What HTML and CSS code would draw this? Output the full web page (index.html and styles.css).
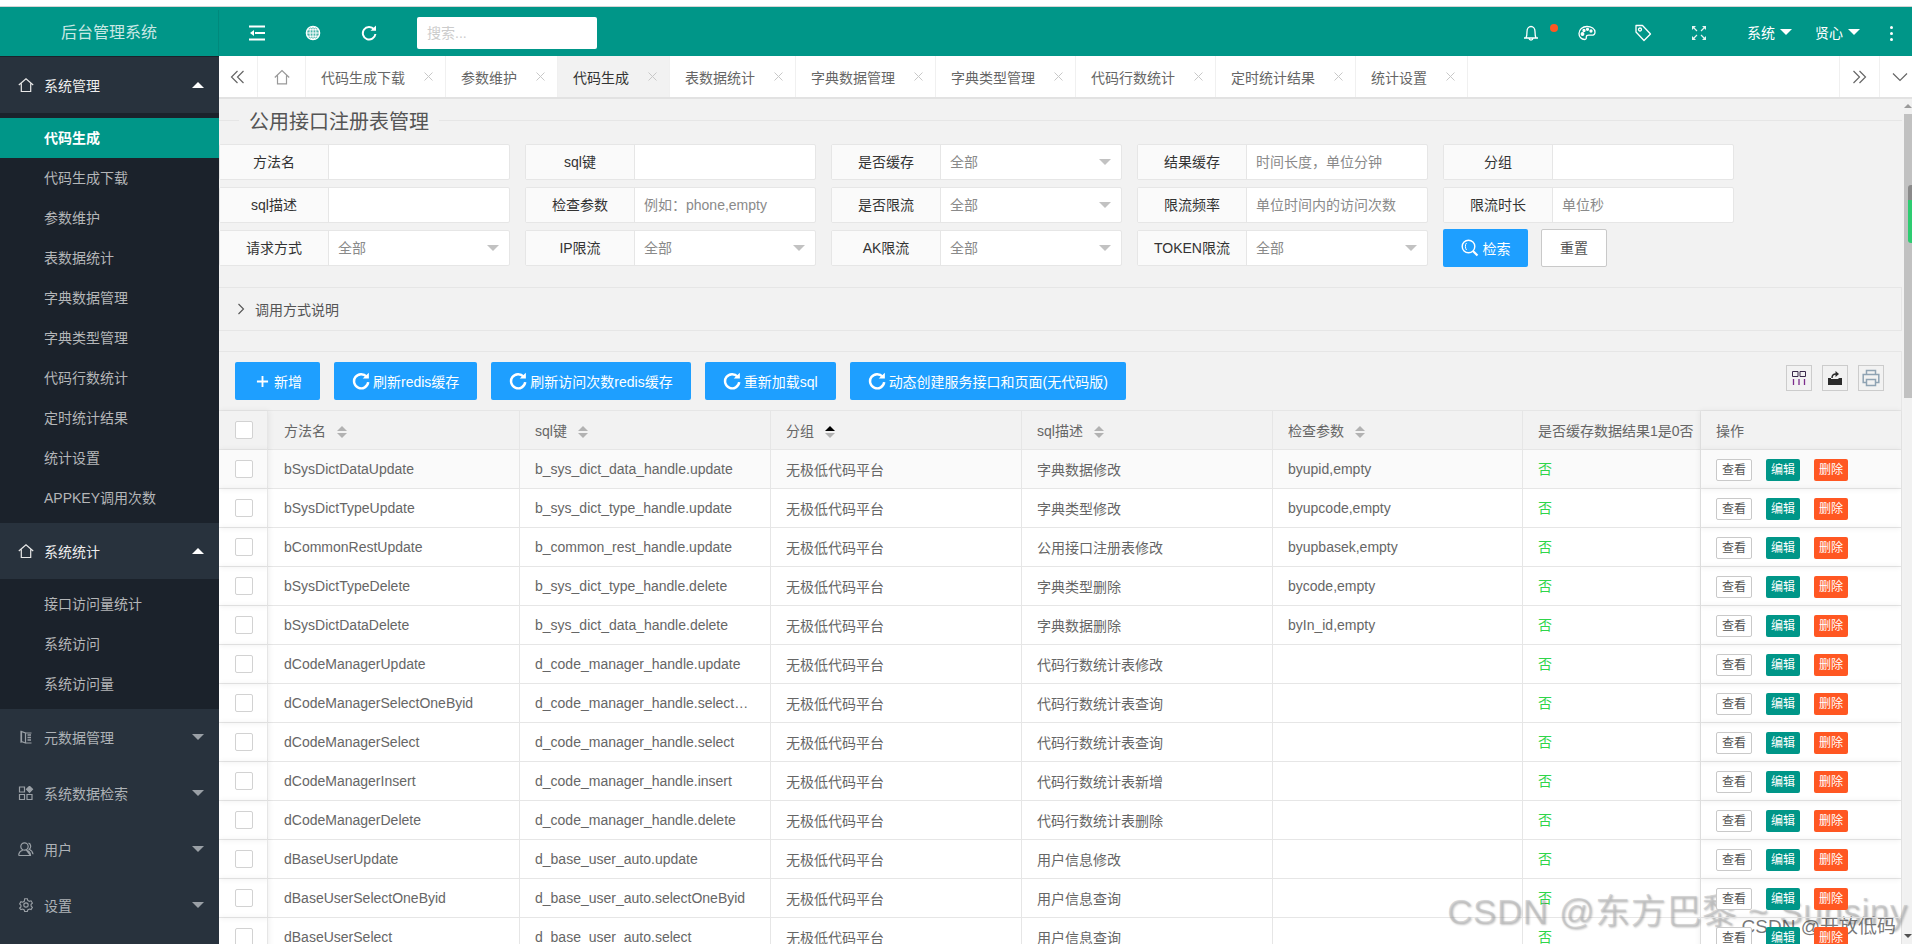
FILE: index.html
```html
<!DOCTYPE html>
<html lang="zh-CN">
<head>
<meta charset="utf-8">
<title>后台管理系统</title>
<link rel="stylesheet" href="styles.css">
</head>
<body>
<div class="app">
  <div class="topstrip"></div>
  <header class="header">
    <div class="logo">后台管理系统</div>
    <div class="hd-icon"><svg class="ic16" viewBox="0 0 16 16"><path d="M0 1.500h16M6 8h10M0 14.500h16" stroke="#fff" stroke-width="2" fill="none"/><path d="M1 8l4-3v6z" fill="#fff"/></svg></div>
    <div class="hd-icon"><svg class="ic16" viewBox="0 0 16 16" fill="none" stroke="#fff"><circle cx="8" cy="8" r="6.600" fill="#cfeee9" fill-opacity=".35" stroke-width="1.400"/><ellipse cx="8" cy="8" rx="3" ry="6.600"/><path d="M8 1.400v13.200M1.400 8h13.200M2.400 4.800h11.200M2.400 11.200h11.200"/></svg></div>
    <div class="hd-icon"><svg class="ic16" viewBox="0 0 16 16" fill="none"><path d="M13 4.200A6.300 6.300 0 1 0 14.400 9" stroke="#fff" stroke-width="2"/><path d="M9.500 5.800H15V.6z" fill="#fff"/></svg></div>
    <div class="hd-search">搜索...</div>
    <div class="hd-right">
      <div class="hd-icon"><svg class="ic18" viewBox="0 0 18 18" fill="none" stroke="#fff" stroke-width="1.300"><path d="M2 14h14M4 14c1-2 1-4 1-6.500C5 4.500 6.800 2.500 9 2.500s4 2 4 5c0 2.500 0 4.500 1 6.500M7 14.500c.3 2 3.700 2 4 0"/></svg><i class="dot"></i></div>
      <div class="hd-icon"><svg class="ic18" viewBox="0 0 18 18" fill="none" stroke="#fff" stroke-width="1.300"><path d="M9 2.500C4.500 2.500 1 5.500 1 9.500c0 3.500 2.500 6 5.500 6 2 0 1.800-1.500 1.800-2.500 0-1.300 1-1.800 2.500-1.800h2.700c2 0 3.500-1 3.500-3 0-3.500-3.500-5.700-8-5.700z"/><circle cx="4.500" cy="10" r="1.300" fill="#fff"/><circle cx="6" cy="6.500" r="1" fill="#fff"/><circle cx="9.500" cy="5.300" r="1" fill="#fff"/><circle cx="13" cy="7" r="1" fill="#fff"/></svg></div>
      <div class="hd-icon"><svg class="ic18" viewBox="0 0 18 18" fill="none" stroke="#fff" stroke-width="1.300"><path d="M2 1.500h6.500l8 8.500-6.500 6.500-8-8.500z" stroke-linejoin="round"/><circle cx="6" cy="5.500" r="1.500"/></svg></div>
      <div class="hd-icon"><svg class="ic14" viewBox="0 0 14 14" fill="none" stroke="#e6f4f2" stroke-width="1.200"><path d="M1.500 1.500L5 5M12.500 1.500L9 5M1.500 12.500L5 9M12.500 12.500L9 9"/><path d="M0 0h4L0 4zM14 0v4l-4-4zM0 14v-4l4 4zM14 14h-4l4-4z" fill="#e6f4f2" stroke="none"/></svg></div>
      <div class="hd-menu">系统<i class="tri-down white"></i></div>
      <div class="hd-menu next">贤心<i class="tri-down white"></i></div>
      <div class="hd-more"><i></i><i></i><i></i></div>
    </div>
  </header>
  <div class="body">
    <aside class="aside">
      <div class="side-head open first"><svg class="side-ic" viewBox="0 0 16 14" fill="none" stroke="#e8e8e8" stroke-width="1.200"><path d="M.8 7L8 .8 15.200 7M3.300 5.500v8h9.400v-8"/></svg><span class="side-label">系统管理</span><i class="tri-up"></i></div>
      <div class="side-sub">
        <div class="side-item active">代码生成</div>
        <div class="side-item">代码生成下载</div>
        <div class="side-item">参数维护</div>
        <div class="side-item">表数据统计</div>
        <div class="side-item">字典数据管理</div>
        <div class="side-item">字典类型管理</div>
        <div class="side-item">代码行数统计</div>
        <div class="side-item">定时统计结果</div>
        <div class="side-item">统计设置</div>
        <div class="side-item">APPKEY调用次数</div>
      </div>
      <div class="side-head open"><svg class="side-ic" viewBox="0 0 16 14" fill="none" stroke="#e8e8e8" stroke-width="1.200"><path d="M.8 7L8 .8 15.200 7M3.300 5.500v8h9.400v-8"/></svg><span class="side-label">系统统计</span><i class="tri-up"></i></div>
      <div class="side-sub">
        <div class="side-item">接口访问量统计</div>
        <div class="side-item">系统访问</div>
        <div class="side-item">系统访问量</div>
      </div>
      <div class="side-head"><svg class="side-ic" viewBox="0 0 16 14" fill="none" stroke="#9aa0a6" stroke-width="1.200"><path d="M3.500 1.500l4 1.500v10l-4-1.500zM7.500 3h6M7.500 13h6M3 .8v12"/><path d="M9.500 5h3.500M9.500 7.500h3.500M9.500 10h3.500" stroke-width="1.500"/></svg><span class="side-label">元数据管理</span><i class="tri-down"></i></div>
      <div class="side-head"><svg class="side-ic" viewBox="0 0 16 14" fill="none" stroke="#9aa0a6" stroke-width="1.200"><path d="M1.500 1h5v5h-5zM1.500 8.500h5v5h-5zM9 8.500h5v5H9z"/><path d="M11.500.3l3 3-3 3-3-3z" fill="#9aa0a6"/></svg><span class="side-label">系统数据检索</span><i class="tri-down"></i></div>
      <div class="side-head"><svg class="side-ic" viewBox="0 0 16 14" fill="none" stroke="#9aa0a6" stroke-width="1.200"><circle cx="6.500" cy="4.500" r="3.700"/><path d="M.7 13.500c0-3 2.300-4.800 4-5.200M8.500 8.300c1.700.4 4 2.200 4 5.200zM.7 13.500h12M10.500 1.200c2.500.7 3 4.500.7 6 1.800.8 3.500 2.500 3.800 5"/></svg><span class="side-label">用户</span><i class="tri-down"></i></div>
      <div class="side-head"><svg class="side-ic" viewBox="0 0 16 16" fill="none" stroke="#9aa0a6" stroke-width="1.300"><path d="M6.500.8h3l.5 2 1.800 1 2-.6 1.500 2.600-1.500 1.400v2l1.500 1.400-1.500 2.600-2-.6-1.800 1-.5 2h-3l-.5-2-1.800-1-2 .6L.7 11.600 2.200 10.200v-2L.7 6.800l1.500-2.600 2 .6 1.800-1z"/><circle cx="8" cy="8" r="2.500"/></svg><span class="side-label">设置</span><i class="tri-down"></i></div>
    </aside>
    <main class="main">
      <nav class="tabs">
        <div class="tab-tool tool-left"><svg class="ic16" viewBox="0 0 16 16" fill="none" stroke="#666" stroke-width="1.200"><path d="M7.500 2L1.500 8l6 6M13.500 2l-6 6 6 6"/></svg></div>
        <div class="tab-home"><svg class="ic16" viewBox="0 0 16 16" fill="none" stroke="#999" stroke-width="1.200"><path d="M.8 8.500L8 1.500l7.200 7M3.500 6.500v8.300h9V6.500"/></svg></div>
        <div class="tab">代码生成下载<svg class="x" viewBox="0 0 9 9"><path d="M.5.500l8 8M8.500.500l-8 8"/></svg></div>
        <div class="tab">参数维护<svg class="x" viewBox="0 0 9 9"><path d="M.5.500l8 8M8.500.500l-8 8"/></svg></div>
        <div class="tab active">代码生成<svg class="x" viewBox="0 0 9 9"><path d="M.5.500l8 8M8.500.500l-8 8"/></svg></div>
        <div class="tab">表数据统计<svg class="x" viewBox="0 0 9 9"><path d="M.5.500l8 8M8.500.500l-8 8"/></svg></div>
        <div class="tab">字典数据管理<svg class="x" viewBox="0 0 9 9"><path d="M.5.500l8 8M8.500.500l-8 8"/></svg></div>
        <div class="tab">字典类型管理<svg class="x" viewBox="0 0 9 9"><path d="M.5.500l8 8M8.500.500l-8 8"/></svg></div>
        <div class="tab">代码行数统计<svg class="x" viewBox="0 0 9 9"><path d="M.5.500l8 8M8.500.500l-8 8"/></svg></div>
        <div class="tab">定时统计结果<svg class="x" viewBox="0 0 9 9"><path d="M.5.500l8 8M8.500.500l-8 8"/></svg></div>
        <div class="tab">统计设置<svg class="x" viewBox="0 0 9 9"><path d="M.5.500l8 8M8.500.500l-8 8"/></svg></div>
        <div class="tab-tool tool-next"><svg class="ic16" viewBox="0 0 16 16" fill="none" stroke="#666" stroke-width="1.200"><path d="M1.500 2l6 6-6 6M7.500 2l6 6-6 6"/></svg></div>
        <div class="tab-tool tool-down"><svg class="ic16" viewBox="0 0 16 16" fill="none" stroke="#666" stroke-width="1.200"><path d="M1 4.500l7 7 7-7"/></svg></div>
      </nav>
      <div class="page">
        <div class="content">
          <div class="legend"><span class="legend-line short"></span><span class="legend-text">公用接口注册表管理</span><span class="legend-line"></span></div>
          <div class="form">
            <div class="field"><label class="f-label">方法名</label><div class="f-input"></div></div>
            <div class="field"><label class="f-label">sql键</label><div class="f-input"></div></div>
            <div class="field"><label class="f-label">是否缓存</label><div class="f-input sel">全部<i class="tri-sel"></i></div></div>
            <div class="field"><label class="f-label">结果缓存</label><div class="f-input">时间长度，单位分钟</div></div>
            <div class="field"><label class="f-label">分组</label><div class="f-input"></div></div>
            <div class="field"><label class="f-label">sql描述</label><div class="f-input"></div></div>
            <div class="field"><label class="f-label">检查参数</label><div class="f-input">例如：phone,empty</div></div>
            <div class="field"><label class="f-label">是否限流</label><div class="f-input sel">全部<i class="tri-sel"></i></div></div>
            <div class="field"><label class="f-label">限流频率</label><div class="f-input">单位时间内的访问次数</div></div>
            <div class="field"><label class="f-label">限流时长</label><div class="f-input">单位秒</div></div>
            <div class="field"><label class="f-label">请求方式</label><div class="f-input sel">全部<i class="tri-sel"></i></div></div>
            <div class="field"><label class="f-label">IP限流</label><div class="f-input sel">全部<i class="tri-sel"></i></div></div>
            <div class="field"><label class="f-label">AK限流</label><div class="f-input sel">全部<i class="tri-sel"></i></div></div>
            <div class="field"><label class="f-label">TOKEN限流</label><div class="f-input sel">全部<i class="tri-sel"></i></div></div>
            <div class="form-btns">
              <div class="btn-search"><svg class="ic18" viewBox="0 0 18 18" fill="none" stroke="#fff" stroke-width="1.400"><circle cx="7.500" cy="7.500" r="6.300"/><path d="M12 12l4.500 4.500" stroke-width="2.200"/><path d="M5.500 4c-1.500 1.500-1.500 5 0 7" stroke-width="1"/></svg>检索</div>
              <div class="btn-reset">重置</div>
            </div>
          </div>
          <div class="collapse"><svg class="chev" viewBox="0 0 8 12" fill="none" stroke="#555" stroke-width="1.100"><path d="M1.500 1l5 5-5 5"/></svg>调用方式说明</div>
          <section class="table-box">
            <div class="toolbar">
              <div class="btn"><svg class="ic-plus" viewBox="0 0 14 14" fill="none" stroke="#fff" stroke-width="2"><path d="M7 1v12M1 7h12"/></svg>新增</div>
              <div class="btn"><svg class="ic-ref" viewBox="0 0 16 16" fill="none"><path d="M13 4.200A6.300 6.300 0 1 0 14.400 9" stroke="#fff" stroke-width="2.200"/><path d="M9.500 5.800H15V.6z" fill="#fff"/></svg>刷新redis缓存</div>
              <div class="btn"><svg class="ic-ref" viewBox="0 0 16 16" fill="none"><path d="M13 4.200A6.300 6.300 0 1 0 14.400 9" stroke="#fff" stroke-width="2.200"/><path d="M9.500 5.800H15V.6z" fill="#fff"/></svg>刷新访问次数redis缓存</div>
              <div class="btn"><svg class="ic-ref" viewBox="0 0 16 16" fill="none"><path d="M13 4.200A6.300 6.300 0 1 0 14.400 9" stroke="#fff" stroke-width="2.200"/><path d="M9.500 5.800H15V.6z" fill="#fff"/></svg>重新加载sql</div>
              <div class="btn"><svg class="ic-ref" viewBox="0 0 16 16" fill="none"><path d="M13 4.200A6.300 6.300 0 1 0 14.400 9" stroke="#fff" stroke-width="2.200"/><path d="M9.500 5.800H15V.6z" fill="#fff"/></svg>动态创建服务接口和页面(无代码版)</div>
              <div class="tools">
                <div class="tool"><svg class="ic14" viewBox="0 0 14 14" fill="none" stroke="#3a2a4a" stroke-width="1"><path d="M.5.500h5.500v5H.5zM8 .5h5.500v5H8z"/><path d="M1.500 8v6M7 8v6M12.500 8v6" stroke="#7c2c8c" stroke-width="1.300"/></svg></div>
                <div class="tool"><svg class="ic14" viewBox="0 0 14 14"><path d="M0 7h3v1h7.500V7H14v7H0z" fill="#2b2b2b"/><path d="M4 7c0-3 2-4 4-4" fill="none" stroke="#2b2b2b" stroke-width="1.500"/><path d="M7.500 0l3.500 3-3.500 3z" fill="#2b2b2b"/></svg></div>
                <div class="tool"><svg class="ic18" viewBox="0 0 18 18" fill="none" stroke="#8fa3b3" stroke-width="1.500"><path d="M4.500 5.500V1.500h9v4M4.500 13.500H1.200V5.500h15.600v8h-3.300"/><path d="M4.500 10.500h9v6h-9z"/></svg></div>
              </div>
            </div>
            <table class="grid">
              <colgroup><col class="c-check"><col class="c-wide"><col class="c-std"><col class="c-std"><col class="c-std"><col class="c-param"><col class="c-cache"><col class="c-op"></colgroup>
              <thead>
                <tr>
                  <th class="fix-l"><i class="cb"></i></th>
                  <th>方法名<span class="sort"><i class="s-up"></i><i class="s-dn"></i></span></th>
                  <th>sql键<span class="sort"><i class="s-up"></i><i class="s-dn"></i></span></th>
                  <th>分组<span class="sort"><i class="s-up on"></i><i class="s-dn"></i></span></th>
                  <th>sql描述<span class="sort"><i class="s-up"></i><i class="s-dn"></i></span></th>
                  <th>检查参数<span class="sort"><i class="s-up"></i><i class="s-dn"></i></span></th>
                  <th class="th-long">是否缓存数据结果1是0否</th>
                  <th class="fix-r">操作</th>
                </tr>
              </thead>
              <tbody>
                <tr class="hover"><td class="fix-l"><i class="cb"></i></td><td>bSysDictDataUpdate</td><td>b_sys_dict_data_handle.update</td><td>无极低代码平台</td><td>字典数据修改</td><td>byupid,empty</td><td class="no">否</td><td class="fix-r"><span class="x-btn view">查看</span><span class="x-btn edit">编辑</span><span class="x-btn del">删除</span></td></tr>
                <tr><td class="fix-l"><i class="cb"></i></td><td>bSysDictTypeUpdate</td><td>b_sys_dict_type_handle.update</td><td>无极低代码平台</td><td>字典类型修改</td><td>byupcode,empty</td><td class="no">否</td><td class="fix-r"><span class="x-btn view">查看</span><span class="x-btn edit">编辑</span><span class="x-btn del">删除</span></td></tr>
                <tr><td class="fix-l"><i class="cb"></i></td><td>bCommonRestUpdate</td><td>b_common_rest_handle.update</td><td>无极低代码平台</td><td>公用接口注册表修改</td><td>byupbasek,empty</td><td class="no">否</td><td class="fix-r"><span class="x-btn view">查看</span><span class="x-btn edit">编辑</span><span class="x-btn del">删除</span></td></tr>
                <tr><td class="fix-l"><i class="cb"></i></td><td>bSysDictTypeDelete</td><td>b_sys_dict_type_handle.delete</td><td>无极低代码平台</td><td>字典类型删除</td><td>bycode,empty</td><td class="no">否</td><td class="fix-r"><span class="x-btn view">查看</span><span class="x-btn edit">编辑</span><span class="x-btn del">删除</span></td></tr>
                <tr><td class="fix-l"><i class="cb"></i></td><td>bSysDictDataDelete</td><td>b_sys_dict_data_handle.delete</td><td>无极低代码平台</td><td>字典数据删除</td><td>byIn_id,empty</td><td class="no">否</td><td class="fix-r"><span class="x-btn view">查看</span><span class="x-btn edit">编辑</span><span class="x-btn del">删除</span></td></tr>
                <tr><td class="fix-l"><i class="cb"></i></td><td>dCodeManagerUpdate</td><td>d_code_manager_handle.update</td><td>无极低代码平台</td><td>代码行数统计表修改</td><td></td><td class="no">否</td><td class="fix-r"><span class="x-btn view">查看</span><span class="x-btn edit">编辑</span><span class="x-btn del">删除</span></td></tr>
                <tr><td class="fix-l"><i class="cb"></i></td><td>dCodeManagerSelectOneByid</td><td>d_code_manager_handle.selectOneByid</td><td>无极低代码平台</td><td>代码行数统计表查询</td><td></td><td class="no">否</td><td class="fix-r"><span class="x-btn view">查看</span><span class="x-btn edit">编辑</span><span class="x-btn del">删除</span></td></tr>
                <tr><td class="fix-l"><i class="cb"></i></td><td>dCodeManagerSelect</td><td>d_code_manager_handle.select</td><td>无极低代码平台</td><td>代码行数统计表查询</td><td></td><td class="no">否</td><td class="fix-r"><span class="x-btn view">查看</span><span class="x-btn edit">编辑</span><span class="x-btn del">删除</span></td></tr>
                <tr><td class="fix-l"><i class="cb"></i></td><td>dCodeManagerInsert</td><td>d_code_manager_handle.insert</td><td>无极低代码平台</td><td>代码行数统计表新增</td><td></td><td class="no">否</td><td class="fix-r"><span class="x-btn view">查看</span><span class="x-btn edit">编辑</span><span class="x-btn del">删除</span></td></tr>
                <tr><td class="fix-l"><i class="cb"></i></td><td>dCodeManagerDelete</td><td>d_code_manager_handle.delete</td><td>无极低代码平台</td><td>代码行数统计表删除</td><td></td><td class="no">否</td><td class="fix-r"><span class="x-btn view">查看</span><span class="x-btn edit">编辑</span><span class="x-btn del">删除</span></td></tr>
                <tr><td class="fix-l"><i class="cb"></i></td><td>dBaseUserUpdate</td><td>d_base_user_auto.update</td><td>无极低代码平台</td><td>用户信息修改</td><td></td><td class="no">否</td><td class="fix-r"><span class="x-btn view">查看</span><span class="x-btn edit">编辑</span><span class="x-btn del">删除</span></td></tr>
                <tr><td class="fix-l"><i class="cb"></i></td><td>dBaseUserSelectOneByid</td><td>d_base_user_auto.selectOneByid</td><td>无极低代码平台</td><td>用户信息查询</td><td></td><td class="no">否</td><td class="fix-r"><span class="x-btn view">查看</span><span class="x-btn edit">编辑</span><span class="x-btn del">删除</span></td></tr>
                <tr><td class="fix-l"><i class="cb"></i></td><td>dBaseUserSelect</td><td>d_base_user_auto.select</td><td>无极低代码平台</td><td>用户信息查询</td><td></td><td class="no">否</td><td class="fix-r"><span class="x-btn view">查看</span><span class="x-btn edit">编辑</span><span class="x-btn del">删除</span></td></tr>
              </tbody>
            </table>
          </section>
        </div>
        <div class="scroll"><div class="thumb"></div></div>
      </div>
    </main>
  </div>
</div>
<div class="widget"></div>
<div class="wm-big">CSDN @东方巴黎 ~ Sunsiny</div>
<div class="wm-small">CSDN @开放低码</div>
</body>
</html>
```

FILE: styles.css
```css
* { box-sizing: border-box; }
html, body { margin: 0; height: 100%; overflow: hidden; }
body {
  position: relative;
  font-family: "Liberation Sans", "Noto Sans CJK SC", sans-serif;
  font-size: 14px;
  color: #666;
  background: #fff;
}
i { font-style: normal; display: block; }
svg { display: block; flex: none; }
.ic14 { width: 14px; height: 14px; }
.ic16 { width: 16px; height: 16px; }
.ic18 { width: 18px; height: 18px; }
.ic-ref { width: 18px; height: 18px; margin-right: 2px; }
.ic-plus { width: 13px; height: 13px; margin: 0 4px 0 3px; }

.app { display: flex; flex-direction: column; height: 100%; }
.topstrip { height: 7px; flex: none; background: #fff; border-bottom: 1px solid #d4d4d4; }

/* header */
.header {
  flex: none; height: 49px; padding-top: 3px;
  display: flex; align-items: center;
  background: #009688; color: #fff;
}
.logo {
  width: 219px; height: 46px; line-height: 46px; text-align: center;
  font-size: 16px; color: rgba(255,255,255,.8);
  border-right: 1px solid #00897c; margin-right: 10px;
}
.hd-icon { width: 56px; height: 46px; display: flex; align-items: center; justify-content: center; position: relative; }
.dot { position: absolute; left: 47px; top: 14px; width: 8px; height: 8px; border-radius: 50%; background: #ff5722; }
.hd-search {
  margin-left: 20px; width: 180px; height: 32px; line-height: 32px;
  padding-left: 10px; background: #fff; border-radius: 2px; color: #ccc; font-size: 14px;
}
.hd-right { margin-left: auto; display: flex; align-items: center; }
.hd-menu { margin-left: 20px; display: flex; align-items: center; gap: 5px; color: #fff; margin-top: -2px; }
.hd-menu.next { margin-left: 23px; }
.hd-more { margin-left: 11px; width: 41px; display: flex; flex-direction: column; align-items: center; gap: 3px; }
.hd-more i { width: 3px; height: 3px; border-radius: 50%; background: #fff; }

.tri-down { width: 0; height: 0; border: 6px solid transparent; border-top-color: #9aa0a6; border-bottom-width: 0; }
.tri-down.white { border-top-color: #fff; }
.tri-up { width: 0; height: 0; border: 6px solid transparent; border-bottom-color: #fff; border-top-width: 0; }

.body { flex: 1; min-height: 0; display: flex; }

/* sidebar */
.aside { flex: none; width: 219px; background: #28323d; overflow: hidden; }
.side-head {
  height: 56px; display: flex; align-items: center;
  padding: 0 15px 0 18px; color: #aeb2b7;
}
.side-head.first { height: 57px; border-top: 1px solid #1b222b; }
.side-head.open { color: #eee; }
.side-ic { width: 16px; height: 14px; margin-right: 10px; }
.side-label { flex: 1; }
.side-sub { background: #1b222b; padding: 5px 0; }
.side-item { height: 40px; line-height: 40px; padding-left: 44px; color: #b4b6b8; }
.side-item.active { background: #009688; color: #fff; font-weight: bold; }

/* tabs */
.main { flex: 1; min-width: 0; display: flex; flex-direction: column; background: #f2f2f2; }
.tabs {
  flex: none; height: 43px; display: flex; background: #fff;
  border-bottom: 2px solid #e2e2e2;
}
.tab-tool, .tab-home { height: 41px; display: flex; align-items: center; justify-content: center; flex: none; }
.tool-left { width: 39px; border-right: 1px solid #f0f0f0; }
.tab-home { width: 48px; border-right: 1px solid #f0f0f0; }
.tool-next { width: 40px; margin-left: auto; border-left: 1px solid #f0f0f0; }
.tool-down { width: 33px; padding-left: 7px; border-left: 1px solid #f0f0f0; }
.tab {
  height: 41px; display: flex; align-items: center; flex: none;
  padding: 0 12px 0 15px; color: #666; border-right: 1px solid #f0f0f0;
}
.tab.active { background: #f2f2f2; color: #333; }
.x { width: 9px; height: 9px; margin-left: 19px; fill: none; stroke: #c8c8c8; stroke-width: 1; }

/* content */
.page { flex: 1; min-height: 0; display: flex; }
.content { flex: 1; min-width: 0; overflow: hidden; margin-right: 2px; }
.scroll { flex: none; width: 8px; background: #f1f1f1; display: flex; flex-direction: column; align-items: center; }
.scroll::before { content: ""; margin-top: 5px; border: 4px solid transparent; border-top-width: 0; border-bottom-color: #9a9a9a; }
.thumb { width: 8px; height: 284px; margin-top: 6px; background: #c1c1c1; }
.scroll::after { content: ""; margin-top: auto; margin-bottom: 6px; border: 4px solid transparent; border-bottom-width: 0; border-top-color: #505050; }

.legend { height: 42px; margin-bottom: 3px; display: flex; align-items: center; gap: 10px; }
.legend-line { flex: 1; height: 1px; background: #e6e6e6; }
.legend-line.short { flex: none; width: 20px; }
.legend-text { font-size: 20px; color: #555; }

.form { display: grid; grid-template-columns: repeat(5, 291px); grid-auto-rows: 36px; column-gap: 15px; row-gap: 7px; }
.field { display: flex; background: #fff; border: 1px solid #e6e6e6; border-radius: 2px; }
.f-label { flex: none; width: 109px; background: #fafafa; border-right: 1px solid #e6e6e6; line-height: 34px; text-align: center; color: #333; }
.f-input { flex: 1; padding: 0 10px 0 9px; line-height: 34px; color: #8a8a8a; white-space: nowrap; }
.f-input.sel { display: flex; align-items: center; justify-content: space-between; }
.tri-sel { border: 6px solid transparent; border-top-color: #c2c2c2; border-bottom-width: 0; }
.form-btns { display: flex; gap: 13px; margin-top: -1px; height: 38px; }
.btn-search {
  width: 85px; height: 38px; background: #1e9fff; color: #fff; border-radius: 2px;
  display: flex; align-items: center; justify-content: center; gap: 4px;
}
.btn-reset {
  width: 66px; height: 38px; line-height: 36px; text-align: center; background: #fff;
  border: 1px solid #c9c9c9; border-radius: 2px; color: #555;
}

.collapse {
  margin-top: 21px; height: 44px; padding: 0 0 1px 18px; border: 1px solid #e6e6e6; border-left: 0;
  display: flex; align-items: center; gap: 10px; color: #555;
}
.chev { width: 8px; height: 12px; }

.table-box { margin-top: 20px; border-top: 1px solid #e6e6e6; border-right: 1px solid #e6e6e6; }
.toolbar {
  height: 59px; padding: 10px 17px 0 16px; display: flex; align-items: flex-start; gap: 14px;
  border-bottom: 1px solid #e6e6e6;
}
.btn {
  height: 38px; padding: 0 18px; background: #1e9fff; color: #fff; border-radius: 2px;
  display: flex; align-items: center; gap: 1px; white-space: nowrap;
}
.tools { margin-left: auto; margin-top: 3px; display: flex; gap: 10px; }
.tool { width: 26px; height: 26px; border: 1px solid #ccc; display: flex; align-items: center; justify-content: center; }

.grid { width: 1682px; table-layout: fixed; border-collapse: separate; border-spacing: 0; background: #fff; }
.c-check { width: 49px; } .c-wide { width: 252px; } .c-std { width: 251px; }
.c-param { width: 250px; } .c-cache { width: 178px; } .c-op { width: 200px; }
.grid th, .grid td {
  height: 39px; padding: 0 15px; text-align: left; font-weight: normal; color: #666;
  border-right: 1px solid #e6e6e6; border-bottom: 1px solid #e6e6e6;
  white-space: nowrap; overflow: hidden; text-overflow: ellipsis;
}
.grid th:nth-child(2), .grid td:nth-child(2) { padding-left: 16px; }
.grid thead th { background: #f2f2f2; }
.grid thead .th-long { padding-right: 0; text-overflow: clip; }
.grid thead .sort { display: inline-flex; flex-direction: column; gap: 2px; vertical-align: middle; margin-left: 11px; }
.s-up { border: 5px solid transparent; border-top-width: 0; border-bottom-color: #b2b2b2; }
.s-up.on { border-bottom-color: #000; }
.s-dn { border: 5px solid transparent; border-bottom-width: 0; border-top-color: #b2b2b2; }
.grid .hover td { background: #fafafa; }
.grid .no { color: #2fd54a; padding-bottom: 3px; }
.grid .fix-l, .grid .fix-r { position: relative; overflow: visible; z-index: 1; }
.grid .fix-l { padding: 0 16px; box-shadow: 1px 0 6px rgba(0,0,0,.07); }
.grid .fix-r { box-shadow: -1px 0 6px rgba(0,0,0,.07); border-right: 0; }
.grid tbody .fix-r { padding-top: 2px; }
.cb { width: 18px; height: 18px; background: #fff; border: 1px solid #d2d2d2; border-radius: 2px; }
.x-btn {
  display: inline-block; height: 22px; line-height: 22px; padding: 0 5px; font-size: 12px;
  color: #fff; border-radius: 2px; margin-right: 14px; vertical-align: middle;
}
.x-btn.view { background: #fff; color: #555; border: 1px solid #c9c9c9; line-height: 20px; }
.x-btn.edit { background: #009688; }
.x-btn.del { background: #ff5722; margin-right: 0; }

/* overlays */
.widget {
  position: absolute; right: 0; top: 185px; width: 4px; height: 58px;
  background: linear-gradient(#8a8a8a 0 26%, #2ecc71 26%);
  border-radius: 3px 0 0 3px;
}
.wm-big {
  position: absolute; right: 4px; top: 890px; font-size: 35px; line-height: 44px; white-space: nowrap;
  color: rgba(175,175,175,.45); text-shadow: 1px 1px 2px rgba(0,0,0,.22); letter-spacing: .6px;
}
.wm-small {
  position: absolute; right: 16px; top: 915px; font-size: 19px; line-height: 24px; white-space: nowrap;
  color: rgba(60,60,60,.7);
}
```
